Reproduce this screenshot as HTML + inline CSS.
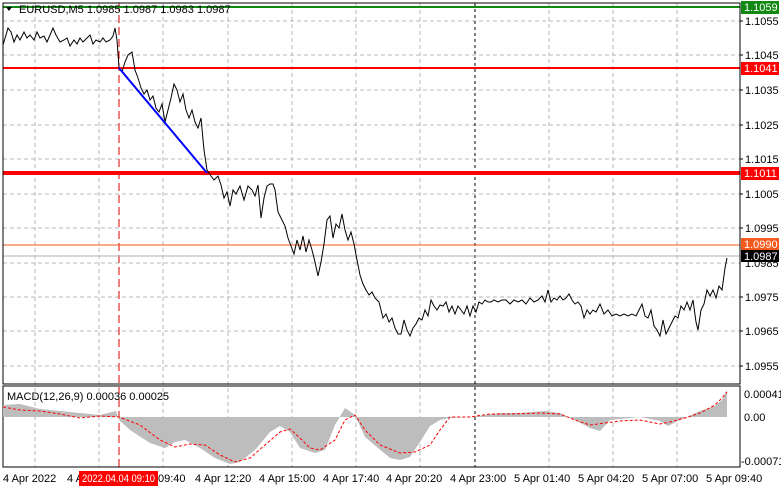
<!DOCTYPE html><html><head><style>
body{margin:0;background:#fff;width:781px;height:489px;overflow:hidden;font-family:"Liberation Sans",sans-serif}
svg text{font-family:"Liberation Sans",sans-serif;font-size:11px}
</style></head><body>
<svg width="781" height="489" xmlns="http://www.w3.org/2000/svg">
<rect width="781" height="489" fill="#fff"/>
<g stroke="#b8b8b8" stroke-dasharray="4,3" stroke-width="1">
<line x1="35" y1="3" x2="35" y2="467"/><line x1="99" y1="3" x2="99" y2="467"/><line x1="163" y1="3" x2="163" y2="467"/><line x1="228" y1="3" x2="228" y2="467"/><line x1="292" y1="3" x2="292" y2="467"/><line x1="356" y1="3" x2="356" y2="467"/><line x1="420" y1="3" x2="420" y2="467"/><line x1="549" y1="3" x2="549" y2="467"/><line x1="613" y1="3" x2="613" y2="467"/><line x1="677" y1="3" x2="677" y2="467"/>
<line x1="3" y1="21" x2="740" y2="21"/><line x1="3" y1="55" x2="740" y2="55"/><line x1="3" y1="90" x2="740" y2="90"/><line x1="3" y1="125" x2="740" y2="125"/><line x1="3" y1="159" x2="740" y2="159"/><line x1="3" y1="194" x2="740" y2="194"/><line x1="3" y1="228" x2="740" y2="228"/><line x1="3" y1="263" x2="740" y2="263"/><line x1="3" y1="297" x2="740" y2="297"/><line x1="3" y1="331" x2="740" y2="331"/><line x1="3" y1="366" x2="740" y2="366"/>
</g>
<line x1="475" y1="3" x2="475" y2="467" stroke="#000" stroke-dasharray="3,3"/>
<line x1="119" y1="3" x2="119" y2="467" stroke="#d00" stroke-dasharray="8,4"/>
<line x1="3" y1="7" x2="740" y2="7" stroke="#118811" stroke-width="2"/>
<line x1="3" y1="68" x2="740" y2="68" stroke="#f00" stroke-width="2"/>
<line x1="3" y1="173" x2="740" y2="173" stroke="#f00" stroke-width="4"/>
<line x1="3" y1="245" x2="740" y2="245" stroke="#f25a1e" stroke-width="1"/>
<line x1="3" y1="256" x2="740" y2="256" stroke="#b0b0b0" stroke-width="1"/>
<polyline fill="none" stroke="#000" stroke-width="1" points="3,45 6,35 8,28 11,32 14,42 17,35 20,40 24,32 27,38 30,35 34,40 37,32 40,38 44,36 47,42 50,35 53,28 56,35 60,42 64,40 67,38 70,46 74,40 77,44 80,38 83,42 87,38 90,35 93,44 96,40 100,42 103,38 106,42 110,40 113,36 115,28 117,40 119,68 122,72 125,62 128,55 132,52 135,70 138,78 141,88 144,94 147,90 150,100 153,96 156,108 159,112 162,104 165,122 168,110 171,98 174,84 177,90 180,102 183,94 186,110 189,118 192,110 195,122 198,128 201,118 204,150 207,170 211,176 214,180 218,176 221,185 224,198 227,192 230,206 233,190 236,194 240,186 244,200 248,186 252,190 255,196 258,185 261,218 264,198 267,186 270,184 273,184 275,190 278,212 282,220 285,226 288,238 291,246 294,254 297,240 300,250 303,236 306,252 309,240 312,250 315,262 318,276 321,262 324,244 327,220 330,216 333,238 336,224 339,228 342,214 345,230 348,240 351,232 354,244 357,260 360,275 363,284 366,290 369,295 372,292 375,298 379,302 383,318 386,314 389,322 392,318 395,328 398,334 401,334 404,320 407,330 410,336 413,328 416,324 419,318 422,320 425,310 428,316 431,300 434,306 437,310 440,305 443,306 446,302 449,312 452,306 455,314 458,306 461,310 464,314 467,306 470,316 473,306 476,312 479,302 482,304 485,300 488,302 491,302 494,300 498,302 502,300 506,300 510,304 514,300 518,302 522,300 526,304 530,298 534,302 538,300 542,296 545,302 548,290 551,302 554,298 557,300 560,296 563,300 566,298 569,294 572,300 575,304 578,302 581,306 584,318 587,310 590,314 593,310 596,312 600,304 604,314 608,310 612,316 616,314 620,316 624,314 628,316 632,314 636,316 639,310 642,304 645,316 648,318 651,310 654,326 657,330 660,336 663,320 666,334 669,328 672,322 675,316 678,318 681,306 684,310 687,302 690,310 693,300 696,322 698,330 701,310 704,304 707,290 710,296 713,290 716,298 719,286 722,290 725,268 727,258"/>
<line x1="119" y1="68" x2="207" y2="173" stroke="#0000ff" stroke-width="2"/>
<rect x="3" y="3" width="737" height="381" fill="none" stroke="#000"/>
<rect x="3" y="386" width="737" height="81" fill="none" stroke="#000"/>
<path fill="#bdbdbd" d="M3,417 L3,405 L20,404 L40,409 L60,411 L80,413 L100,415 L116,411 L119,420 L130,430 L150,443 L165,448 L175,442 L185,440 L200,448 L215,458 L230,464 L240,462 L255,450 L270,432 L280,426 L290,432 L300,448 L315,453 L325,450 L335,425 L345,408 L355,415 L365,437 L378,448 L390,458 L400,460 L410,457 L420,442 L430,426 L440,420 L450,418 L470,417 L500,413 L520,413 L545,411 L560,413 L575,420 L590,428 L600,431 L610,420 L640,417 L660,421 L668,426 L680,420 L700,411 L715,406 L722,400 L727,390 L727,417 Z"/>
<polyline fill="none" stroke="#f00" stroke-dasharray="3,2" points="3,407 20,410 40,411 60,414 80,418 100,416 119,417 140,425 160,440 175,447 190,444 205,445 220,455 235,462 250,458 265,445 280,432 290,429 300,438 310,448 320,450 335,440 345,420 355,415 365,430 380,445 400,453 415,452 430,445 440,430 450,417 470,417 490,414 510,414 540,413 560,414 575,420 590,425 605,423 620,421 640,420 660,424 670,422 685,418 700,413 715,405 722,398 727,392"/>
<g fill="#000">
<text x="19" y="13">EURUSD,M5  1.0985 1.0987 1.0983 1.0987</text>
<text x="7" y="400">MACD(12,26,9) 0.00036 0.00025</text>
</g>
<path d="M6,7 L12,7 L9,11 Z" fill="#000"/>
<g fill="#000">
<text x="745" y="25">1.1055</text><text x="745" y="59">1.1045</text><text x="745" y="94">1.1035</text><text x="745" y="129">1.1025</text><text x="745" y="163">1.1015</text><text x="745" y="198">1.1005</text><text x="745" y="232">1.0995</text><text x="745" y="267">1.0985</text><text x="745" y="301">1.0975</text><text x="745" y="335">1.0965</text><text x="745" y="370">1.0955</text>
<text x="744" y="398">0.00041</text><text x="744" y="421">0.00</text><text x="741" y="465">-0.00071</text>
</g>
<rect x="741" y="1" width="38" height="13" fill="#118811"/><text x="744" y="11" fill="#fff">1.1059</text>
<rect x="741" y="62" width="38" height="13" fill="#f00"/><text x="744" y="72" fill="#fff">1.1041</text>
<rect x="741" y="167" width="38" height="13" fill="#f00"/><text x="744" y="177" fill="#fff">1.1011</text>
<rect x="741" y="238" width="38" height="13" fill="#f25a1e"/><text x="744" y="248" fill="#fff">1.0990</text>
<rect x="741" y="250" width="38" height="12" fill="#000"/><text x="744" y="260" fill="#fff">1.0987</text>
<g stroke="#000"><line x1="740" y1="21" x2="743" y2="21"/><line x1="740" y1="55" x2="743" y2="55"/><line x1="740" y1="90" x2="743" y2="90"/><line x1="740" y1="125" x2="743" y2="125"/><line x1="740" y1="159" x2="743" y2="159"/><line x1="740" y1="194" x2="743" y2="194"/><line x1="740" y1="228" x2="743" y2="228"/><line x1="740" y1="297" x2="743" y2="297"/><line x1="740" y1="331" x2="743" y2="331"/><line x1="740" y1="366" x2="743" y2="366"/></g>
<g fill="#000">
<text x="3" y="482">4 Apr 2022</text><text x="67" y="482">4 A</text><text x="158" y="482">09:40</text><text x="195" y="482">4 Apr 12:20</text><text x="259" y="482">4 Apr 15:00</text><text x="323" y="482">4 Apr 17:40</text><text x="386" y="482">4 Apr 20:20</text><text x="450" y="482">4 Apr 23:00</text><text x="514" y="482">5 Apr 01:40</text><text x="578" y="482">5 Apr 04:20</text><text x="642" y="482">5 Apr 07:00</text><text x="706" y="482">5 Apr 09:40</text>
</g>
<rect x="79" y="471" width="79" height="15" fill="#f00"/><text x="82" y="482" fill="#fff" textLength="73" lengthAdjust="spacingAndGlyphs">2022.04.04 09:10</text>
</svg>
</body></html>
